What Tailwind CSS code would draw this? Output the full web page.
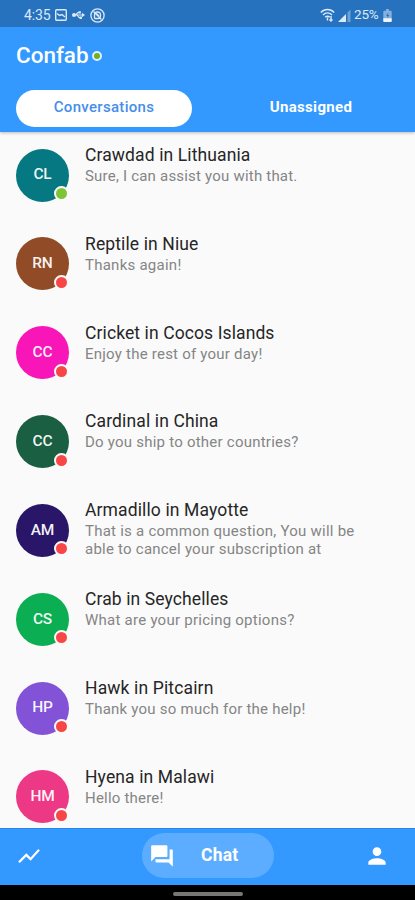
<!DOCTYPE html>
<html lang="en">
<head>
<meta charset="utf-8">
<title>Confab</title>
<script src="https://cdn.jsdelivr.net/npm/@tailwindcss/browser@4"></script>
</head>
<body class="w-[415px] h-[900px] overflow-hidden bg-[#fafafa] font-['Roboto',sans-serif] flex flex-col">
<header class="relative z-10 shrink-0 h-[132px] bg-[#3399ff] shadow-[0_1px_3px_rgba(0,0,0,0.25)] flex flex-col">
  <div class="h-[27px] shrink-0 bg-[#2672bf] flex items-center pl-6 pr-[23px] pt-[3px] text-[#dbe9f8] text-[14px] leading-none">
    <span class="w-[27px] whitespace-nowrap tracking-[-0.1px]">4:35</span>
    <svg class="ml-[4px] w-3 h-3" viewBox="0 0 12 12" fill="none" stroke="currentColor" stroke-width="1.4"><rect x=".7" y=".7" width="10.6" height="10.6" rx="1"/><path d="M2 4.500 4.500 6.500 7 5.500 10 8"/></svg>
    <svg class="ml-[5px] w-[13px] h-3" viewBox="0 0 13 12" fill="none" stroke="currentColor" stroke-width="1.200"><path d="M1 6H12M3.500 6 6 3.500H8M5 6 7 8.500H9"/><circle cx="2" cy="6" r="2" fill="currentColor" stroke="none"/><path d="M10 3.800 13 6 10 8.200ZM6.500 2.200h2.400v2.400H6.500zM7.500 7.500h2.400v2.400H7.500z" fill="currentColor" stroke="none"/></svg>
    <svg class="ml-[5px] w-[15px] h-[15px]" viewBox="0 0 15 15" fill="none" stroke="currentColor" stroke-width="1.300"><circle cx="7.500" cy="7.500" r="6.600"/><path d="M4.500 10.500V6.500a2.500 2.500 0 0 1 2.500-2.500H8a2.500 2.500 0 0 1 2.500 2.500V8A2.500 2.500 0 0 1 8 10.500H4.500M3.500 3.500 11.500 11.500M6.500 5.500 9 8"/></svg>
    <svg class="ml-auto w-[15px] h-[14px]" viewBox="0 0 15 14" fill="none" stroke="currentColor" stroke-width="1.400"><path d="M.8 4.500C4.500 .400 10.500 .400 14.200 4.500M3 7C5.500 4.200 9.500 4.200 12 7M5.200 9.300C6.500 7.800 8.500 7.800 9.800 9.300"/><path d="M7.500 9.500v3M11 8v5M9.500 11.500 11 13l1.500-1.500"/></svg>
    <svg class="ml-[3px] w-[13px] h-[13px]" viewBox="0 0 13 13" fill="currentColor"><path d="M0 13 8 5V13Z"/><path d="M9.500 3.500 12.500 .500V13H9.500Z" opacity=".4"/></svg>
    <span class="ml-[3px] w-[25px] whitespace-nowrap text-[13.500px] tracking-[-0.200px]">25%</span>
    <svg class="ml-[4px] w-[9px] h-[13px]" viewBox="0 0 9 14"><path d="M3 0h3v2h2q1 0 1 1v10q0 1-1 1H1q-1 0-1-1V3q0-1 1-1h2z" fill="#86afdc"/><path d="M0 10h9v3q0 1-1 1H1q-1 0-1-1z" fill="#eef5fd"/><path d="M5.500 3.500 3 7.500H4.500V10L6.500 6.500H5z" fill="#2672bf"/></svg>
  </div>
  <div class="flex items-center h-[58px] pl-4 text-white">
    <h1 class="text-[22.500px] font-medium leading-none w-[73px] whitespace-nowrap pb-px"><span data-font="500 22.5px" data-w="72">Confab</span></h1>
    <span class="ml-[3px] w-[10px] h-[10px] rounded-full bg-[#72b01d] border-2 border-[#e0effc]"></span>
  </div>
  <nav class="flex items-center px-4 mt-[5px] h-[37px] text-[15px] font-medium">
    <div class="w-44 h-[37px] rounded-full bg-white text-[#478eea] flex items-center justify-center pb-[2px]"><span data-font="500 15px" data-w="100">Conversations</span></div>
    <div class="ml-[31px] w-44 flex justify-center text-white pb-[2px]"><span class="font-bold" data-font="700 15px" data-w="82">Unassigned</span></div>
  </nav>
</header>
<main id="list" class="h-[696px] shrink-0 overflow-hidden"></main>
<footer class="h-[57px] shrink-0 bg-[#3399ff] border-t border-[#2389ee] flex items-center px-4 pb-[3px] text-white">
  <svg class="w-[26px] h-[26px]" viewBox="0 0 24 24" fill="currentColor"><path d="M3.500 18.490l6-6.010 4 4L22 6.920l-1.410-1.410-7.090 7.970-4-4L2 16.990z"/></svg>
  <div class="ml-[100px] w-[132px] h-[45px] rounded-full bg-[#5cadff] flex items-center pl-[7px]">
    <svg class="w-[26px] h-[26px]" viewBox="0 0 24 24" fill="currentColor"><path d="M21 6h-2v9H6v2c0 .55.45 1 1 1h11l4 4V7c0-.55-.45-1-1-1zm-4 6V3c0-.55-.45-1-1-1H3c-.55 0-1 .45-1 1v14l4-4h10c.55 0 1-.45 1-1z"/></svg>
    <span class="ml-[26px] text-[17.500px] font-bold" data-font="700 17.5px" data-w="37">Chat</span>
  </div>
  <svg class="ml-[90px] w-[26px] h-[26px]" viewBox="0 0 24 24" fill="currentColor"><path d="M12 12c2.210 0 4-1.790 4-4s-1.790-4-4-4-4 1.790-4 4 1.790 4 4 4zm0 2c-2.670 0-8 1.340-8 4v2h16v-2c0-2.660-5.330-4-8-4z"/></svg>
</footer>
<div class="h-[15px] shrink-0 bg-black flex justify-center pt-[7px]"><div class="w-[70px] h-[4px] rounded-full bg-[#777]"></div></div>
<script>
const rows = [
  ["CL", "#067882", "Crawdad in Lithuania", ["Sure, I can assist you with that."], 165, [212]],
  ["RN", "#914c27", "Reptile in Niue", ["Thanks again!"], 113, [96]],
  ["CC", "#f816b8", "Cricket in Cocos Islands", ["Enjoy the rest of your day!"], 189, [177]],
  ["CC", "#1b5f43", "Cardinal in China", ["Do you ship to other countries?"], 133, [213]],
  ["AM", "#291668", "Armadillo in Mayotte", ["That is a common question, You will be", "able to cancel your subscription at"], 163, [269, 236]],
  ["CS", "#0cae54", "Crab in Seychelles", ["What are your pricing options?"], 143, [209]],
  ["HP", "#8253d7", "Hawk in Pitcairn", ["Thank you so much for the help!"], 128, [220]],
  ["HM", "#ed3886", "Hyena in Malawi", ["Hello there!"], 129, [78]]
];
document.getElementById("list").innerHTML = rows.map((r, i) => `
  <div class="h-[88.850px] flex pl-4 pt-[16.500px]">
    <div class="relative w-[53px] h-[53px] shrink-0 rounded-full flex items-center justify-center text-white/95 text-[15.500px] font-medium" style="background:${r[1]}"><span class="tracking-[-0.200px]">${r[0]}</span>
      <span class="absolute left-[38px] top-[37.500px] w-[15px] h-[15px] rounded-full border-2 border-[#fafafa] ${i ? "bg-[#f84646]" : "bg-[#7fc435]"}"></span>
    </div>
    <div class="ml-4 -mt-[4.600px] whitespace-nowrap">
      <div class="text-[17.500px] leading-[22px] text-[#262626]"><span data-font="400 17.5px" data-w="${r[4]}">${r[2]}</span></div>
      <div class="pt-px text-[15px] leading-[18px] text-[#858585]">${r[3].map((s, k) => `<div><span data-font="400 15px" data-w="${r[5][k]}">${s}</span></div>`).join("")}</div>
    </div>
  </div>`).join("");
// Spread each line's letters evenly over its measure.
const ctx = document.createElement("canvas").getContext("2d");
document.querySelectorAll("[data-w]").forEach(el => {
  ctx.font = el.dataset.font + " Roboto";
  el.style.letterSpacing = (+el.dataset.w + 0.5 - ctx.measureText(el.textContent).width) / el.textContent.length + "px";
});
</script>
</body>
</html>
